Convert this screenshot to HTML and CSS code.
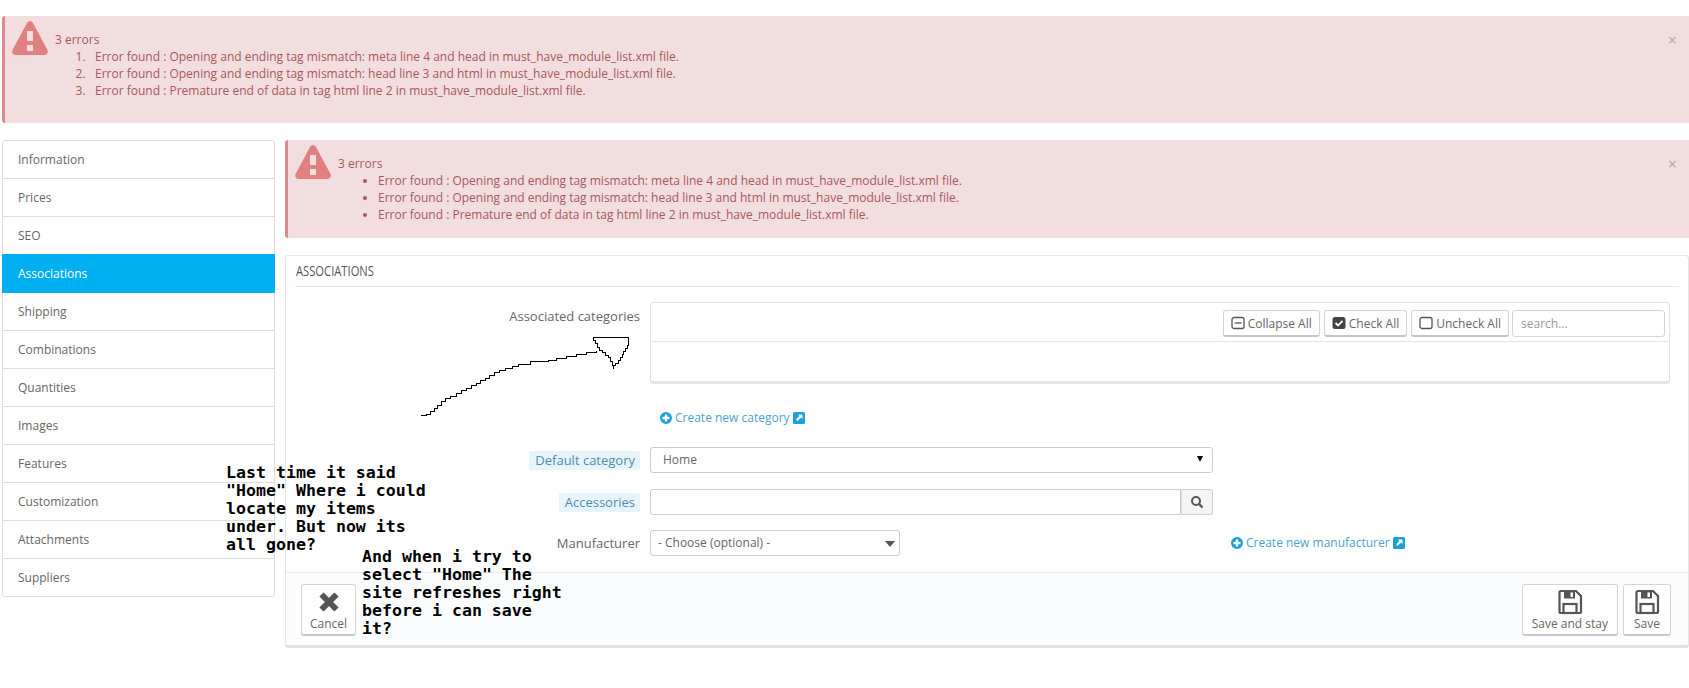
FILE: index.html
```html
<!DOCTYPE html>
<html lang="en">
<head>
  <meta charset="UTF-8">
  <title>Associations</title>
  <link rel="stylesheet" href="styles.css">
</head>
<body>

  <div class="alert topAlert">
    <svg class="alertIcon" viewBox="0 0 36 34"><path d="M18 0 C19.500 0 20.500 1 21 2 L35.500 29 C36.500 31.500 35 34 32.500 34 L3.500 34 C1 34 -0.500 31.500 0.500 29 L15 2 C15.500 1 16.500 0 18 0 Z M15 10 L15 20 L21 20 L21 10 Z M15 24 L15 30 L21 30 L21 24 Z" fill-rule="evenodd"/></svg>
    <div class="alertBody">
      <div>3 errors</div>
      <ol>
        <li>Error found : Opening and ending tag mismatch: meta line 4 and head in must_have_module_list.xml file.</li>
        <li>Error found : Opening and ending tag mismatch: head line 3 and html in must_have_module_list.xml file.</li>
        <li>Error found : Premature end of data in tag html line 2 in must_have_module_list.xml file.</li>
      </ol>
    </div>
    <span class="alertClose">×</span>
  </div>

  <div class="pageRow">
    <ul class="sideNav">
      <li>Information</li>
      <li>Prices</li>
      <li>SEO</li>
      <li class="active">Associations</li>
      <li>Shipping</li>
      <li>Combinations</li>
      <li>Quantities</li>
      <li>Images</li>
      <li>Features</li>
      <li>Customization</li>
      <li>Attachments</li>
      <li>Suppliers</li>
    </ul>

    <div class="mainCol">
      <div class="alert innerAlert">
        <svg class="alertIcon" viewBox="0 0 36 34"><path d="M18 0 C19.500 0 20.500 1 21 2 L35.500 29 C36.500 31.500 35 34 32.500 34 L3.500 34 C1 34 -0.500 31.500 0.500 29 L15 2 C15.500 1 16.500 0 18 0 Z M15 10 L15 20 L21 20 L21 10 Z M15 24 L15 30 L21 30 L21 24 Z" fill-rule="evenodd"/></svg>
        <div class="alertBody">
          <div>3 errors</div>
          <ul>
            <li>Error found : Opening and ending tag mismatch: meta line 4 and head in must_have_module_list.xml file.</li>
            <li>Error found : Opening and ending tag mismatch: head line 3 and html in must_have_module_list.xml file.</li>
            <li>Error found : Premature end of data in tag html line 2 in must_have_module_list.xml file.</li>
          </ul>
        </div>
        <span class="alertClose">×</span>
      </div>

      <div class="panel">
        <div class="panelHeading"><span>ASSOCIATIONS</span></div>

        <div class="formRow treeRow">
          <label class="formLabel">Associated categories</label>
          <div class="tree">
            <div class="treeToolbar">
              <button class="btn">
                <svg class="btnIcon" viewBox="0 0 14 14"><rect x="1" y="1.500" width="12" height="11" rx="2" fill="none" stroke="#555" stroke-width="1.300"/><path d="M3.500 7 H10.500" stroke="#555" stroke-width="1.300"/></svg>
                Collapse All
              </button>
              <button class="btn">
                <svg class="btnIcon" viewBox="0 0 14 14"><rect x="0.500" y="1" width="13" height="12" rx="2.500" fill="#444"/><path d="M3.500 7 L6 9.500 L10.500 4.800" fill="none" stroke="#fff" stroke-width="1.800"/></svg>
                Check All
              </button>
              <button class="btn">
                <svg class="btnIcon" viewBox="0 0 14 14"><rect x="1" y="1.500" width="12" height="11" rx="2" fill="none" stroke="#555" stroke-width="1.300"/></svg>
                Uncheck All
              </button>
              <input class="treeSearch" type="text" placeholder="search...">
            </div>
            <div class="treeBody"></div>
          </div>
        </div>

        <div class="formRow linkRow">
          <span></span>
          <a class="addLink">
            <svg class="linkIcon" viewBox="0 0 14 14"><path d="M7 1 A6 6 0 1 0 7 13 A6 6 0 1 0 7 1 Z M5.800 3.500 H8.200 V5.800 H10.500 V8.200 H8.200 V10.500 H5.800 V8.200 H3.500 V5.800 H5.800 Z" fill="#1ba1d8" fill-rule="evenodd"/></svg>
            Create new category
            <svg class="linkIcon" viewBox="0 0 14 14"><path d="M2.500 1 H11.500 A1.500 1.500 0 0 1 13 2.500 V11.500 A1.500 1.500 0 0 1 11.500 13 H2.500 A1.500 1.500 0 0 1 1 11.500 V2.500 A1.500 1.500 0 0 1 2.500 1 Z M6 3.500 L7.400 4.900 L4 8.400 L5.600 10 L9.100 6.600 L10.500 8 V3.500 Z" fill="#1ba1d8" fill-rule="evenodd"/></svg>
          </a>
        </div>

        <div class="formRow selectRow">
          <label class="formLabel"><span class="hintLabel">Default category</span></label>
          <div class="selectBox wideBox">Home<span class="caret"></span></div>
        </div>

        <div class="formRow accessRow">
          <label class="formLabel"><span class="hintLabel">Accessories</span></label>
          <div class="inputGroup wideBox">
            <div class="inputField"></div>
            <div class="inputAddon">
              <svg viewBox="0 0 14 14" width="14" height="14"><circle cx="6" cy="6" r="4" fill="none" stroke="#555" stroke-width="2"/><path d="M9 9 L12.500 12.500" stroke="#555" stroke-width="2.400"/></svg>
            </div>
          </div>
        </div>

        <div class="formRow makerRow">
          <label class="formLabel">Manufacturer</label>
          <div class="makerLine">
            <div class="selectBox narrowBox">- Choose (optional) -<span class="caret grey"></span></div>
            <a class="addLink">
              <svg class="linkIcon" viewBox="0 0 14 14"><path d="M7 1 A6 6 0 1 0 7 13 A6 6 0 1 0 7 1 Z M5.800 3.500 H8.200 V5.800 H10.500 V8.200 H8.200 V10.500 H5.800 V8.200 H3.500 V5.800 H5.800 Z" fill="#1ba1d8" fill-rule="evenodd"/></svg>
              Create new manufacturer
              <svg class="linkIcon" viewBox="0 0 14 14"><path d="M2.500 1 H11.500 A1.500 1.500 0 0 1 13 2.500 V11.500 A1.500 1.500 0 0 1 11.500 13 H2.500 A1.500 1.500 0 0 1 1 11.500 V2.500 A1.500 1.500 0 0 1 2.500 1 Z M6 3.500 L7.400 4.900 L4 8.400 L5.600 10 L9.100 6.600 L10.500 8 V3.500 Z" fill="#1ba1d8" fill-rule="evenodd"/></svg>
            </a>
          </div>
        </div>

        <div class="panelFooter">
          <button class="bigBtn">
            <svg viewBox="0 0 26 26" width="26" height="26"><path d="M5.500 5.500 L20.500 20.500 M20.500 5.500 L5.500 20.500" stroke="#555" stroke-width="6"/></svg>
            Cancel
          </button>
          <div class="footerRight">
            <button class="bigBtn">
              <svg viewBox="0 0 26 26" width="26" height="26"><path d="M2.500 3.500 A1.500 1.500 0 0 1 4 2 H19 L24 7 V22.500 A1.500 1.500 0 0 1 22.500 24 H4 A1.500 1.500 0 0 1 2.500 22.500 Z" fill="none" stroke="#555" stroke-width="2.200"/><rect x="7" y="2" width="11" height="7.500" fill="#555"/><rect x="13.500" y="3.500" width="2.500" height="4.500" fill="#fff"/><rect x="6.500" y="15" width="13" height="9" fill="none" stroke="#555" stroke-width="2.200"/></svg>
              Save and stay
            </button>
            <button class="bigBtn">
              <svg viewBox="0 0 26 26" width="26" height="26"><path d="M2.500 3.500 A1.500 1.500 0 0 1 4 2 H19 L24 7 V22.500 A1.500 1.500 0 0 1 22.500 24 H4 A1.500 1.500 0 0 1 2.500 22.500 Z" fill="none" stroke="#555" stroke-width="2.200"/><rect x="7" y="2" width="11" height="7.500" fill="#555"/><rect x="13.500" y="3.500" width="2.500" height="4.500" fill="#fff"/><rect x="6.500" y="15" width="13" height="9" fill="none" stroke="#555" stroke-width="2.200"/></svg>
              Save
            </button>
          </div>
        </div>
      </div>
    </div>
  </div>

  <!-- hand drawn notes on top of the page -->
  <svg class="scribble" viewBox="0 0 1689 688" width="1689" height="688">
    <path d="M420 415 H426 V414 H430 V411 H434 V408 H437 V405 H441 V401 H445 V398 H450 V396 H456 V393 H461 V390 H466 V388 H471 V385 H476 V383 H480 V380 H485 V378 H489 V375 H494 V372 H499 V370 H505 V368 H512 V366 H518 V364 H530 V361 H548 V360 H556 V358 H566 V356 H576 V354 H586 V352 H596 V350" />
    <path d="M592 337 H628 V345 H627 V348 H625 V351 H623 V354 H622 V357 H620 V360 H618 V363 H615 V365 H613 V368 V365 H612 V361 H610 V357 H608 V355 H605 V352 H602 V350 H599 V347 H597 V343 H595 V340 H593 V337" />
  </svg>
  <div class="note noteOne">Last time it said
"Home" Where i could
locate my items
under. But now its
all gone?</div>
  <div class="note noteTwo">And when i try to
select "Home" The
site refreshes right
before i can save
it?</div>

</body>
</html>
```

FILE: styles.css
```css
* {
  box-sizing: border-box;
}

html, body {
  height: 688px;
}

body {
  margin: 0;
  padding-top: 16px;
  position: relative;
  overflow: hidden;
  background: #fff;
  color: #666;
  font-family: "Open Sans", sans-serif;
  font-size: 12px;
}

/* Alerts */
.alert {
  position: relative;
  display: flex;
  background: #f2dede;
  color: #a9575b;
  border-left: 3px solid #dd8a8e;
  border-radius: 3px 0 0 3px;
  line-height: 17px;
}

.topAlert {
  height: 107px;
  margin: 0 0 17px 2px;
}

.innerAlert {
  height: 98px;
  margin-bottom: 17px;
}

.alertIcon {
  width: 36px;
  height: 34px;
  margin: 5px 0 0 7px;
  flex: none;
  fill: #e08080;
}

.alertBody {
  margin: 15px 0 0 7px;
}

.alertBody ol, .alertBody ul {
  margin: 0;
  padding-left: 40px;
}

.alertBody ol li::marker {
  content: counter(list-item) ".\00a0\00a0\00a0";
}

.alertClose {
  position: absolute;
  top: 15px;
  right: 12px;
  font-size: 16px;
  line-height: 18px;
  color: #b9a3a6;
}

/* Layout */
.pageRow {
  display: flex;
  margin-left: 2px;
  align-items: flex-start;
}

.sideNav {
  width: 273px;
  flex: none;
  margin: 0 10px 0 0;
  padding: 0;
  list-style: none;
  border: 1px solid #ddd;
  border-radius: 3px;
}

.sideNav li {
  height: 38px;
  line-height: 37px;
  padding-left: 15px;
  border-bottom: 1px solid #ddd;
}

.sideNav li:last-child {
  height: 37px;
  border-bottom: none;
}

.sideNav li.active {
  background: #00aff0;
  color: #fff;
  margin: -1px -1px 0;
  padding-left: 16px;
  height: 39px;
  line-height: 40px;
  border-bottom: none;
}

.mainCol {
  flex: 1;
  min-width: 0;
}

/* Panel */
.panel {
  height: 393px;
  border: 1px solid #e6e6e6;
  border-bottom: 3px solid #e2e2e2;
  border-radius: 3px;
  display: flex;
  flex-direction: column;
}

.panelHeading {
  height: 31px;
  margin: 0 9px;
  line-height: 30px;
  border-bottom: 1px solid #e6e6e6;
  font-size: 14px;
  color: #555;
}

/* no condensed face here, so squeeze the normal one */
.panelHeading span {
  display: inline-block;
  margin-left: 1px;
  transform: scaleX(0.8);
  transform-origin: left center;
}

.formRow {
  display: grid;
  grid-template-columns: 364px 1fr;
}

.formLabel {
  text-align: right;
  padding-right: 10px;
  line-height: 19px;
  font-size: 13px;
}

.hintLabel {
  display: inline-block;
  padding: 0 5px 0 6px;
  background: #e8f4fa;
  color: #4a8fb0;
  border-radius: 2px;
}

.treeRow {
  margin-top: 15px;
}

.treeRow .formLabel {
  padding-top: 5px;
}

.tree {
  width: 1020px;
  height: 82px;
  border: 1px solid #e0e0e0;
  border-bottom: 3px solid #e4e4e4;
  border-radius: 4px;
}

.treeToolbar {
  height: 39px;
  display: flex;
  justify-content: flex-end;
  align-items: center;
  gap: 4px;
  padding-right: 4px;
  padding-top: 3px;
  border-bottom: 1px solid #e4e4e4;
}

.btn {
  height: 27px;
  padding: 0 7px;
  display: flex;
  align-items: center;
  gap: 3px;
  background: #fff;
  color: #666;
  font-family: inherit;
  font-size: 12px;
  border: 1px solid #d4d4d4;
  border-bottom: 2px solid #c4c4c4;
  border-radius: 3px;
}

.btnIcon {
  width: 14px;
  height: 14px;
}

.treeSearch {
  width: 153px;
  height: 27px;
  padding: 0 8px;
  margin-left: -1px;
  font-family: inherit;
  font-size: 12px;
  border: 1px solid #d4d4d4;
  border-radius: 3px;
}

.treeSearch::placeholder {
  color: #999;
}

.linkRow {
  margin-top: 25px;
  padding-left: 9px;
}

.addLink {
  display: inline-flex;
  align-items: center;
  gap: 2px;
  color: #4ba3c9;
  font-size: 12px;
  line-height: 18px;
}

.linkIcon {
  width: 14px;
  height: 14px;
}

.selectRow {
  margin-top: 20px;
}

.selectRow .formLabel, .accessRow .formLabel, .makerRow .formLabel {
  padding-top: 4px;
}

.accessRow {
  margin-top: 16px;
}

.makerRow {
  margin-top: 15px;
}

.selectBox {
  position: relative;
  height: 26px;
  line-height: 24px;
  border: 1px solid #ccc;
  border-radius: 3px;
  color: #666;
  background: #fff;
}

.wideBox {
  width: 563px;
}

.selectRow .selectBox {
  padding-left: 12px;
}

.narrowBox {
  width: 250px;
  padding-left: 7px;
}

.caret {
  position: absolute;
  right: 9px;
  top: 8px;
  border-left: 3px solid transparent;
  border-right: 3px solid transparent;
  border-top: 6px solid #111;
}

.caret.grey {
  right: 4px;
  top: 10px;
  border-top-color: #555;
  border-left-width: 5px;
  border-right-width: 5px;
}

.inputGroup {
  display: flex;
  height: 26px;
}

.inputField {
  flex: 1;
  border: 1px solid #ccc;
  border-radius: 3px 0 0 3px;
}

.inputAddon {
  width: 32px;
  display: flex;
  align-items: center;
  justify-content: center;
  background: #f5f5f5;
  border: 1px solid #ccc;
  border-left: 1px solid #ddd;
  border-radius: 0 3px 3px 0;
}

.makerLine {
  display: flex;
  align-items: center;
  gap: 330px;
}

.panelFooter {
  margin-top: auto;
  height: 73px;
  padding: 11px 17px 0 15px;
  display: flex;
  justify-content: space-between;
  align-items: flex-start;
  background: #fbfcfe;
  border-top: 1px solid #e6e6e6;
}

.footerRight {
  display: flex;
  gap: 5px;
}

.bigBtn {
  height: 52px;
  padding: 4px 8px 0;
  display: flex;
  flex-direction: column;
  align-items: center;
  background: #fff;
  color: #666;
  font-family: inherit;
  font-size: 12px;
  line-height: 18px;
  border: 1px solid #d4d4d4;
  border-bottom: 2px solid #c8c8c8;
  border-radius: 3px;
}

.footerRight .bigBtn {
  min-width: 48px;
  padding: 4px 9px 0;
}

/* Paint notes */
.scribble {
  position: absolute;
  top: 0;
  left: 0;
  pointer-events: none;
}

.scribble path {
  fill: none;
  stroke: #000;
  stroke-width: 1;
  shape-rendering: crispEdges;
  transform: translate(0.5px, 0.5px);
}

.note {
  position: absolute;
  white-space: pre;
  color: #000;
  font-family: "DejaVu Sans Mono", monospace;
  font-weight: bold;
  font-size: 16.600px;
  line-height: 18px;
}

.noteOne {
  left: 226px;
  top: 464px;
}

.noteTwo {
  left: 362px;
  top: 548px;
}
```
